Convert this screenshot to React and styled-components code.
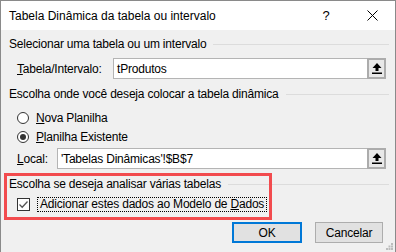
import React from 'react';
import styled, { createGlobalStyle } from 'styled-components';

const GlobalStyle = createGlobalStyle`
  html, body { margin: 0; padding: 0; background: #fff; }
`;

const Window = styled.div`
  width: 396px;
  height: 252px;
  box-sizing: border-box;
  border: 1px solid #8a8a8a;
  border-bottom: none;
  background: #f0f0f0;
  display: flex;
  flex-direction: column;
  font-family: "Segoe UI", "Liberation Sans", Arial, sans-serif;
  font-size: 12px;
  line-height: 16px;
  color: #000;
  position: relative;
  overflow: hidden;
`;

const TitleBar = styled.div`
  height: 29px;
  background: #fff;
  display: flex;
  align-items: center;
  padding-left: 8px;
`;

const Title = styled.div`
  flex: 1;
`;

const CaptionButton = styled.div`
  width: 46px;
  height: 29px;
  display: flex;
  align-items: center;
  justify-content: center;
  font-size: 13px;
`;

const Body = styled.div`
  flex: 1;
  display: flex;
  flex-direction: column;
  padding: 6px 6px 0 8px;
  letter-spacing: -0.2px;
`;

const GroupHeader = styled.div`
  display: flex;
  align-items: center;
  gap: 7px;
  height: 16px;
  margin-top: ${p => p.$mt || 0}px;
  &::after {
    content: "";
    flex: 1;
    height: 1px;
    background: #dcdcdc;
  }
`;

const FieldRow = styled.div`
  display: flex;
  align-items: center;
  margin: ${p => p.$mt || 0}px 3px 0 8px;
  height: 21px;
`;

const Label = styled.div`
  width: ${p => p.$w}px;
`;

const Input = styled.div`
  flex: 1;
  height: 100%;
  box-sizing: border-box;
  background: #fff;
  border: 1px solid #b4b4b4;
  border-right: none;
  padding-left: 3px;
  display: flex;
  align-items: center;
`;

const PickButton = styled.div`
  width: 19px;
  height: 100%;
  box-sizing: border-box;
  border: 2px solid #acacac;
  background: #e8e8e8;
  display: flex;
  align-items: center;
  justify-content: center;
`;

const OptionRow = styled.div`
  display: flex;
  align-items: center;
  gap: 7px;
  height: 16px;
  margin: ${p => p.$mt || 0}px 0 0 8px;
`;

const Radio = styled.span`
  width: 12px;
  height: 12px;
  box-sizing: border-box;
  border: 1px solid #333;
  border-radius: 50%;
  background: #fff;
  display: flex;
  align-items: center;
  justify-content: center;
  &::after {
    content: "";
    display: ${p => (p.$checked ? 'block' : 'none')};
    width: 6px;
    height: 6px;
    border-radius: 50%;
    background: #333;
  }
`;

const Key = styled.span`
  text-decoration: underline;
`;

const Highlighted = styled.div`
  position: relative;
  margin-top: 7px;
`;

const Annotation = styled.div`
  position: absolute;
  left: -5px;
  top: -3px;
  width: 268px;
  height: 47px;
  box-sizing: border-box;
  border: 3px solid #f24b4e;
  pointer-events: none;
`;

const CheckBox = styled.span`
  width: 13px;
  height: 13px;
  box-sizing: border-box;
  border: 1px solid #333;
  background: #fff;
  display: flex;
  align-items: center;
  justify-content: center;
`;

const FocusLabel = styled.span`
  border: 1px dotted #000;
  padding: 0 2px;
  line-height: 13px;
`;

const ButtonRow = styled.div`
  display: flex;
  justify-content: flex-end;
  gap: 13px;
  margin: 10px 6px 0 0;
`;

const Button = styled.div`
  width: ${p => p.$w}px;
  height: 21px;
  box-sizing: border-box;
  background: #e1e1e1;
  border: ${p => (p.$default ? '2px solid #0078d7' : '1px solid #adadad')};
  display: flex;
  align-items: center;
  justify-content: center;
`;

const Grip = styled.svg`
  position: absolute;
  right: 2px;
  bottom: 2px;
`;

const UpArrow = () => (
  <svg width="10" height="11" viewBox="0 0 10 11">
    <path d="M5 0 L9.5 5 L6.5 5 L6.5 8 L3.5 8 L3.5 5 L0.5 5 Z" fill="#000" />
    <rect x="0" y="9.5" width="10" height="1.5" fill="#000" />
  </svg>
);

export default function App() {
  return (
    <>
      <GlobalStyle />
      <Window>
        <TitleBar>
          <Title>Tabela Dinâmica da tabela ou intervalo</Title>
          <CaptionButton>?</CaptionButton>
          <CaptionButton>
            <svg width="11" height="11" viewBox="0 0 11 11">
              <path d="M0.5 0.5 L10.5 10.5 M10.5 0.5 L0.5 10.5" stroke="#000" strokeWidth="1" />
            </svg>
          </CaptionButton>
        </TitleBar>
        <Body>
          <GroupHeader>Selecionar uma tabela ou um intervalo</GroupHeader>
          <FieldRow $mt={6}>
            <Label $w={96}><Key>T</Key>abela/Intervalo:</Label>
            <Input>tProdutos</Input>
            <PickButton><UpArrow /></PickButton>
          </FieldRow>

          <GroupHeader $mt={7}>Escolha onde você deseja colocar a tabela dinâmica</GroupHeader>
          <OptionRow $mt={8}>
            <Radio />
            <span><Key>N</Key>ova Planilha</span>
          </OptionRow>
          <OptionRow $mt={3}>
            <Radio $checked />
            <span><Key>P</Key>lanilha Existente</span>
          </OptionRow>
          <FieldRow $mt={3}>
            <Label $w={40}><Key>L</Key>ocal:</Label>
            <Input>'Tabelas Dinâmicas'!$B$7</Input>
            <PickButton><UpArrow /></PickButton>
          </FieldRow>

          <Highlighted>
            <GroupHeader>Escolha se deseja analisar várias tabelas</GroupHeader>
            <OptionRow $mt={4}>
              <CheckBox>
                <svg width="11" height="11" viewBox="0 0 11 11">
                  <path d="M1.5 5.5 L4.2 8.2 L9.5 2.5" stroke="#555" strokeWidth="1.3" fill="none" />
                </svg>
              </CheckBox>
              <FocusLabel>Adicionar estes dados ao Modelo de <Key>D</Key>ados</FocusLabel>
            </OptionRow>
            <Annotation />
          </Highlighted>

          <ButtonRow>
            <Button $w={70} $default>OK</Button>
            <Button $w={68}>Cancelar</Button>
          </ButtonRow>
        </Body>
        <Grip width="7" height="7" viewBox="0 0 7 7">
          <rect x="5" y="0" width="2" height="2" fill="#bcbcbc" />
          <rect x="2.5" y="2.5" width="2" height="2" fill="#bcbcbc" />
          <rect x="5" y="2.5" width="2" height="2" fill="#bcbcbc" />
          <rect x="0" y="5" width="2" height="2" fill="#bcbcbc" />
          <rect x="2.5" y="5" width="2" height="2" fill="#bcbcbc" />
          <rect x="5" y="5" width="2" height="2" fill="#bcbcbc" />
        </Grip>
      </Window>
    </>
  );
}
